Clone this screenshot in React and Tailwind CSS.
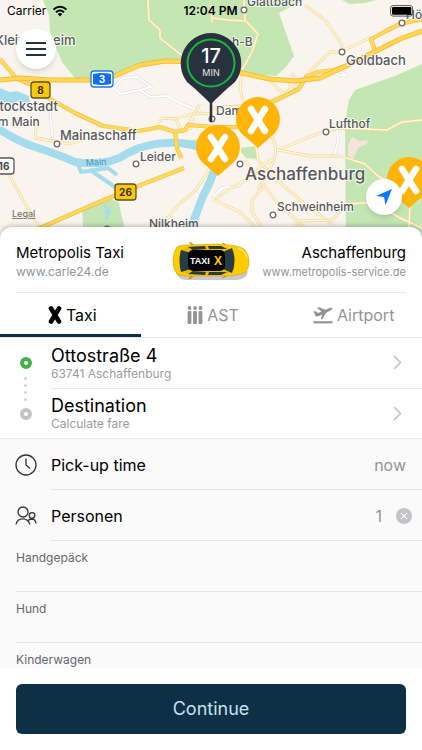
import React, { useState } from 'react';

const ROADS = [
  'M148 0 L149 20 L160 30 L160 38 L180 54 L205 66',
  'M305 5 L325 20 L341 43 L342 52',
  'M342 52 L330 52 L310 71 L296 88 L270 101',
  'M342 51 L370 38',
  'M213 18 L228 20 L246 21 L258 34 L252 52 L242 70',
  'M211 5 L212 22 M244 0 L245 22',
  'M242 72 L240 88 L244 105 L236 128',
  'M236 128 Q260 122 272 137 Q280 152 270 168 L258 190',
  'M211 108 L240 106 L258 100',
  'M278 150 L324 131 L340 128 L387 130 L402 122 L422 120',
  'M278 150 L310 156 L340 156 L365 164 L378 176 L410 196',
  'M256 146 L258 160 L275 178 L300 200 L332 224',
  'M245 160 L262 182 L277 203 L305 228',
  'M215 200 L228 190 L250 178 L262 165 L275 158',
  'M212 199 L240 212 L256 228',
  'M265 185 L252 200 L252 212 L262 228',
  'M293 228 L300 221 L332 220 L347 204 L380 202',
  'M378 205 L400 218 L422 228 M410 205 L409 228',
  'M37 120 L35 138 L70 144 L84 139',
  'M0 158 L14 184 L30 212 L40 228',
  'M212 165 L196 190 L178 205 L160 228',
  'M155 128 L162 118 L175 119 L196 113 L211 114',
  'M175 118 L182 132 L191 128 L193 116 M185 130 L200 104',
  'M270 81 L284 94 L298 84 L292 73 M300 87 L292 92 L288 80',
];

const SIDE_STREETS =
  'M115 88 L122 78 L137 77 L151 87 L140 90 L150 97 L167 96 L182 104 M115 88 L120 94 L140 90 M182 104 L200 111 M335 74 L346 76 L342 72 M275 100 L300 88 M215 195 L222 188 L240 186 M50 113 L53 140 M337 130 L338 142 L334 156';

const MAIN_ROADS = [
  'M0 59 L16 78 L38 88 L50 99 L75 113 L103 126 L138 131 L150 129 L160 127 L175 132 L185 130 L188 125 L215 127 L240 127',
  'M175 132 L177 148 L181 158',
  'M38 229 L90 206 L128 190 L184 168',
  'M422 19 L400 24 L386 31 L371 39 L375 51',
  'M270 103 L299 89 L306 77 L318 72 L334 70 L345 66',
];

const MOTORWAY =
  'M0 80 L20 78 L50 80 L90 80 L112 77 L140 65 L165 61 L205 62 L242 73 L270 79 L295 81 L320 78 L346 66 L376 51 L400 39 L422 31';

const PLACES = [
  { name: 'Kleinostheim', x: -5, y: 45, size: 13 },
  { name: 'Stockstadt', x: -9, y: 111, size: 13 },
  { name: 'am Main', x: -9, y: 126, size: 12 },
  { name: 'Mainaschaff', x: 60, y: 140, size: 13 },
  { name: 'Leider', x: 140, y: 161, size: 12 },
  { name: 'Nilkheim', x: 149, y: 228, size: 12 },
  { name: 'Glattbach', x: 247, y: 6, size: 12 },
  { name: 'Goldbach', x: 346, y: 65, size: 13 },
  { name: 'Hösbach', x: 406, y: 19, size: 12 },
  { name: 'h-B', x: 232, y: 46, size: 12 },
  { name: 'Damm', x: 216, y: 115, size: 12 },
  { name: 'Lufthof', x: 329, y: 128, size: 12 },
  { name: 'Schweinheim', x: 277, y: 211, size: 12 },
  { name: 'Aschaffenburg', x: 245, y: 180, size: 17 },
];

const DOTS = [
  [57, 144], [136, 164], [342, 52], [402, 23], [244, 10],
  [212, 119], [240, 164], [326, 132], [273, 215], [107, 229],
];

const TAXIS = [
  { x: 258, y: 120 },
  { x: 218, y: 148 },
  { x: 409, y: 180 },
];

function Shield({ x, y, width, label, fill, stroke, color }) {
  return (
    <g>
      <rect x={x} y={y} width={width} height="16" rx="3" fill={fill} stroke={stroke} strokeWidth="1.3" />
      <text x={x + width / 2} y={y + 12} textAnchor="middle" fontSize="10" fontWeight="700" fill={color}>{label}</text>
    </g>
  );
}

function CityMap() {
  return (
    <svg viewBox="0 0 422 240" preserveAspectRatio="xMidYMin slice" className="absolute inset-0 h-full w-full" role="img" aria-label="Map of Aschaffenburg">
      <rect x="-200" width="900" height="240" fill="#f9f4ed" />

      {/* woods */}
      <g fill="#c3e6b3">
        <path d="M43 0 L49 15 L50 32 L62 62 L75 78 L112 77 L140 65 L165 61 L205 62 L242 73 L276 76 L286 67 L294 56 L279 13 L303 0 Z" />
        <path d="M342 0 L350 4 L365 3 L376 0 Z" />
        <path d="M422 64 L395 76 L355 90 L349 100 L345 122 L346 240 L700 240 L700 64 Z" />
        <path d="M82 208 L112 199 L119 203 L121 214 L125 228 L125 240 L84 240 Z" />
        <path d="M241 148 L256 146 L257 159 L246 158 L241 152 Z" />
        <path d="M184 141 L200 139 L200 147 L188 148 Z" />
      </g>
      <path d="M352 137 L360 141 L368 140 L367 144 L358 148 L353 159 L348 156 L348 145 Z" fill="#f7e3dd" />

      {/* water */}
      <g fill="none" stroke="#a4dcee" strokeLinejoin="round">
        <path d="M-4 127 Q15 140 35 147 Q60 155 75 162 Q108 167 128 153 Q150 141 180 143 Q212 146 216 164 Q212 180 203 196 L190 230" strokeWidth="8" />
        <path d="M77 162 L81 172 L108 168 L117 175" strokeWidth="4" />
        <path d="M90 170 L118 189" strokeWidth="4" />
      </g>
      <path d="M0 88 L10 92 L17 91 L29 96 L30 104 L18 101 L8 105 L0 102 Z" fill="#a4dcee" />
      <path d="M104 203 L111 211 L106 222 Z" fill="#a4dcee" />

      {/* streets: casing first, then the lighter fill */}
      <g fill="none" strokeLinejoin="round">
        <path d={SIDE_STREETS} stroke="#d9d9dc" strokeWidth="3" />
        <path d={SIDE_STREETS} stroke="#fff" strokeWidth="2" />
        {ROADS.map((d) => (
          <g key={d}>
            <path d={d} stroke="#f1d795" strokeWidth="2.8" />
            <path d={d} stroke="#fff6d9" strokeWidth="1.5" />
          </g>
        ))}
        {MAIN_ROADS.map((d) => (
          <g key={d}>
            <path d={d} stroke="#eebb4a" strokeWidth="4.2" />
            <path d={d} stroke="#ffda58" strokeWidth="3" />
          </g>
        ))}
        <path d={MOTORWAY} stroke="#eeb63c" strokeWidth="5" />
        <path d={MOTORWAY} stroke="#ffd64d" strokeWidth="3.6" />
      </g>

      {DOTS.map(([cx, cy]) => (
        <circle key={`${cx}-${cy}`} cx={cx} cy={cy} r="2.8" fill="#fff" stroke="#6b6b6b" strokeWidth="1.3" />
      ))}

      <g fill="#58585a" stroke="#fff" strokeOpacity="0.8" strokeWidth="2" strokeLinejoin="round" className="[paint-order:stroke]">
        {PLACES.map((p) => (
          <text key={p.name} x={p.x} y={p.y} fontSize={p.size} fontWeight="500">{p.name}</text>
        ))}
      </g>
      <text x="86" y="166" fontSize="9" fill="#4c93b5" transform="rotate(-4 86 166)">Main</text>
      <text x="12" y="217" fontSize="9" fontWeight="500" fill="#77736f" textDecoration="underline">Legal</text>

      <Shield x={31} y={82} width={19} label="8" fill="#f9c70c" stroke="#5d511c" color="#3a3000" />
      <Shield x={115} y={184} width={21} label="26" fill="#f9c70c" stroke="#5d511c" color="#3a3000" />
      <Shield x={-6} y={158} width={20} label="16" fill="#fff" stroke="#555" color="#444" />
      <rect x="91" y="71" width="22" height="16" rx="3" fill="#fff" stroke="#1b78e8" strokeWidth="1.3" />
      <path d="M93 74 Q102 72 111 74 V84 Q102 86 93 84 Z" fill="#0f6ff0" />
      <text x="102" y="83" textAnchor="middle" fontSize="10" fontWeight="700" fill="#fff">3</text>

      {/* pick-up pin */}
      <path d="M211 95 V121" stroke="#28323f" strokeWidth="2.5" strokeLinecap="round" />
      <path d="M211 33 A30.500 30.500 0 0 1 235 82 Q224 91 211 104 Q198 91 187 82 A30.500 30.500 0 0 1 211 33 Z" fill="#28323f" />
      <circle cx="211" cy="63" r="23.500" fill="none" stroke="#17b53c" strokeWidth="2" />
      <text x="211" y="63" textAnchor="middle" fontSize="20" fontWeight="500" fill="#fff">17</text>
      <text x="211" y="76" textAnchor="middle" fontSize="9" fill="#e3e6ea">MIN</text>

      {TAXIS.map(({ x, y }) => (
        <g key={x} transform={`translate(${x} ${y})`}>
          <path d="M0 -23 A22 22 0 0 1 16 14 L0 28 L-16 14 A22 22 0 0 1 0 -23 Z" fill="#ffb507" />
          <path d="M-7 -11 L7 11 M7 -11 L-7 11" stroke="#fff" strokeWidth="6.500" strokeLinecap="round" />
        </g>
      ))}
    </svg>
  );
}

function StatusBar() {
  return (
    <div className="relative grid h-[22px] grid-cols-3 items-center pl-[7px] pr-2 text-xs text-black">
      <div className="flex items-center gap-1.5">
        Carrier
        <svg viewBox="0 0 16 12" className="h-3 w-4" aria-hidden="true">
          <path d="M1.500 4.500 Q8 -1 14.500 4.500 M4 7.300 Q8 3.800 12 7.300" fill="none" stroke="#000" strokeWidth="2" />
          <path d="M5.700 9 Q8 7.200 10.300 9 L8 11.400 Z" />
        </svg>
      </div>
      <span className="text-center font-semibold">12:04 PM</span>
      <svg viewBox="0 0 26 12" className="h-3 w-[26px] justify-self-end" aria-hidden="true">
        <rect x="2.600" y="0.600" width="22" height="10.500" rx="2.500" fill="none" stroke="#555" />
        <rect x="4" y="2" width="19.300" height="7.700" rx="1.200" />
      </svg>
    </div>
  );
}

function TaxiCar() {
  return (
    <svg viewBox="0 0 80 40" className="h-10 w-20 shrink-0" role="img" aria-label="Taxi X">
      <path d="M5 30 Q7 38 16 38 L66 38 Q76 37 77 29 Z" fill="#c9c9cb" />
      <path d="M21 4 L18 0 L20 0 L24 4 Z M20 33 L17 37 L20 37 L24 33 Z M55 5 L51 1 L53 1 L58 5 Z M55 32 L51 36 L53 36 L58 32 Z" fill="#d79b00" />
      <path d="M6 5 Q9 3 17 3 L48 2 Q67 3 73 7 Q78 12 78 19 Q78 28 73 31 Q67 34 48 34 L17 34 Q9 34 6 32 Q2 27 2 19 Q2 10 6 5 Z" fill="#fc0" stroke="#d49c05" strokeWidth="0.6" />
      <path d="M10 8 Q14 5 20 4 L48 4 Q59 5 63 10 Q65 19 63 28 Q59 32 48 33 L20 33 Q14 32 10 29 Q7 19 10 8 Z" fill="#f0b800" />
      <path d="M10 8 L20 11 Q17 19 20 27 L10 30 Q7 19 10 8 Z" fill="#263e43" />
      <path d="M52 10 L61 6 Q66 19 61 31 L52 27 Q55 19 52 10 Z" fill="#263e43" />
      <path d="M17 5 L34 4 L35 7 L22 8 Z M37 4 L50 4 L56 7 L38 7 Z M17 32 L34 33 L35 30 L22 29 Z M37 33 L50 33 L56 30 L38 30 Z" fill="#27393c" />
      <rect x="17" y="8" width="37" height="21" rx="5" fill="#050505" />
      <g fontFamily="'Liberation Sans', sans-serif" fontWeight="700">
        <text x="19" y="22" fontSize="9" fill="#fff">TAXI</text>
        <text x="43" y="23" fontSize="12" fill="#ffcb05">X</text>
      </g>
      <path d="M67 6 Q75 9 76 16" fill="none" stroke="#fff0a2" />
    </svg>
  );
}

function XMark() {
  return (
    <svg viewBox="0 0 14 20" className="h-5 w-3.5" aria-hidden="true">
      <path d="M3 3.500 L11 16.500 M11 3.500 L3 16.500" stroke="currentColor" strokeWidth="4.600" strokeLinecap="round" />
    </svg>
  );
}

function PeopleMark() {
  return (
    <svg viewBox="0 0 16 20" className="h-5 w-4" fill="currentColor" aria-hidden="true">
      {[2.5, 8, 13.5].map((x) => (
        <g key={x}>
          <circle cx={x} cy="3" r="1.900" />
          <rect x={x - 1.9} y="6" width="3.800" height="13" rx="1" />
        </g>
      ))}
    </svg>
  );
}

function PlaneMark() {
  return (
    <svg viewBox="0 0 20 18" className="h-[18px] w-5" fill="currentColor" aria-hidden="true">
      <path d="M0.500 5.500 L2 5 L5 7 L8.500 5.500 L4 2 L6 1.200 L12.500 3.800 L16.500 2 Q19 0.800 19.500 2 Q19.700 3.200 17.500 4.400 L13 7 L9.500 13 L7.800 13.500 L9 8.800 L4.500 10.500 Q3 10.700 2.400 9.500 Z" />
      <rect x="0.500" y="15.200" width="19" height="2.200" />
    </svg>
  );
}

const TABS = [
  { id: 'taxi', label: 'Taxi', Icon: XMark },
  { id: 'ast', label: 'AST', Icon: PeopleMark },
  { id: 'airport', label: 'Airtport', Icon: PlaneMark },
];

function Chevron() {
  return (
    <svg viewBox="0 0 9 15" className="mr-5 h-[15px] w-[9px]" aria-hidden="true">
      <path d="M1 1 L7.500 7.500 L1 14" fill="none" stroke="#c5c5ca" strokeWidth="1.700" />
    </svg>
  );
}

function RouteRow({ title, subtitle }) {
  return (
    <button type="button" className="flex w-full flex-1 items-center justify-between text-left">
      <span className="flex flex-col pt-0.5">
        <span className="text-lg leading-5 text-black">{title}</span>
        <span className="text-xs leading-4 text-[#9b9ca0]">{subtitle}</span>
      </span>
      <Chevron />
    </button>
  );
}

export default function App() {
  const [tab, setTab] = useState('taxi');
  const [persons, setPersons] = useState(1);

  return (
    <div className="flex h-dvh flex-col overflow-hidden bg-white font-['Inter','Noto_Sans',sans-serif]">
      <header className="relative h-60 shrink-0">
        <CityMap />
        <StatusBar />
        <button type="button" aria-label="Menu" className="absolute left-4 top-[29px] flex size-10 flex-col items-center justify-center gap-1 rounded-full bg-white shadow-md">
          <span className="h-0.5 w-5 bg-[#28323f]" />
          <span className="h-0.5 w-5 bg-[#28323f]" />
          <span className="h-0.5 w-5 bg-[#28323f]" />
        </button>
        <button type="button" aria-label="Show my location" className="absolute right-5 top-[179px] flex size-9 items-center justify-center rounded-full bg-white shadow-md">
          <svg viewBox="0 0 18 18" className="size-[18px]" aria-hidden="true">
            <path d="M17 1 L10.500 17 L9 9 L1 8 Z" fill="#087aff" />
          </svg>
        </button>
      </header>

      <main className="relative -mt-[13px] flex min-h-0 flex-1 flex-col rounded-t-xl bg-white shadow-[0_-1px_5px_rgba(0,0,0,0.25)]">
        <section className="mx-4 flex h-[66px] shrink-0 items-center justify-between border-b border-[#e9e9ec] pt-1">
          <div className="flex flex-1 flex-col">
            <h1 className="text-[15px] leading-5 text-black">Metropolis Taxi</h1>
            <a href="#carle24" className="text-xs leading-[18px] text-[#939498]">www.carle24.de</a>
          </div>
          <TaxiCar />
          <div className="flex flex-1 flex-col items-end">
            <h2 className="text-[15px] leading-5 text-black">Aschaffenburg</h2>
            <a href="#metropolis-service" className="text-[11px] leading-[18px] text-[#939498]">www.metropolis-service.de</a>
          </div>
        </section>

        <div role="tablist" className="grid h-[45px] shrink-0 grid-cols-3 border-b border-[#e9e9ec]">
          {TABS.map(({ id, label, Icon }) => (
            <button
              key={id}
              type="button"
              role="tab"
              aria-selected={tab === id}
              onClick={() => setTab(id)}
              className={`flex items-center justify-center gap-1 border-b-3 pl-1 pt-0.5 text-base ${tab === id ? 'border-[#0d3047] text-black' : 'border-transparent text-[#939498]'}`}
            >
              <Icon />
              {label}
            </button>
          ))}
        </div>

        <section className="flex h-[101px] shrink-0 border-b border-[#e9e9ec]">
          <div className="flex w-[51px] flex-col items-center justify-between pb-[18px] pt-[19px]">
            <span className="size-3 rounded-full border-4 border-[#43b149] bg-white" />
            <span className="flex flex-col gap-1">
              <span className="size-[3px] rounded-full bg-[#d3d3d6]" />
              <span className="size-[3px] rounded-full bg-[#d3d3d6]" />
              <span className="size-[3px] rounded-full bg-[#d3d3d6]" />
              <span className="size-[3px] rounded-full bg-[#d3d3d6]" />
            </span>
            <span className="size-3 rounded-full border-4 border-[#c5c3c5] bg-white" />
          </div>
          <div className="flex flex-1 flex-col divide-y divide-[#e9e9ec]">
            <RouteRow title="Ottostraße 4" subtitle="63741 Aschaffenburg" />
            <RouteRow title="Destination" subtitle="Calculate fare" />
          </div>
        </section>

        <section className="min-h-0 flex-1 overflow-hidden bg-[#fafafa]">
          <button type="button" className="flex h-[51px] w-full items-center text-left">
            <span className="flex w-[51px] justify-center">
              <svg viewBox="0 0 22 22" className="size-[22px]" fill="none" stroke="#333" strokeWidth="1.300" aria-hidden="true">
                <circle cx="11" cy="11" r="10" />
                <path d="M11 4.500 V11 L15 14.500" />
              </svg>
            </span>
            <span className="flex h-full flex-1 items-center justify-between border-b border-[#e4e4ea] pr-4 pt-0.5">
              <span className="text-base text-black">Pick-up time</span>
              <span className="text-base text-[#939498]">now</span>
            </span>
          </button>

          <div className="flex h-[51px] items-center">
            <span className="flex w-[51px] justify-center">
              <svg viewBox="0 0 22 20" className="h-5 w-[22px]" fill="none" stroke="#333" strokeWidth="1.300" aria-hidden="true">
                <circle cx="8" cy="6" r="5" />
                <circle cx="17" cy="9.500" r="2.800" />
                <path d="M1 18.500 Q2 12.800 8 12.800 Q13 12.800 15 18.500 M12.500 15 Q14.500 13 17 13 Q20.500 13.300 21 17.500" />
              </svg>
            </span>
            <div className="flex h-full flex-1 items-center border-b border-[#e4e4ea] pr-2.5 pt-0.5">
              <span className="flex-1 text-base text-black">Personen</span>
              <span className="mr-3.5 text-base text-[#939498]">{persons}</span>
              <button type="button" aria-label="Reset persons" onClick={() => setPersons(1)} className="flex size-4 items-center justify-center rounded-full bg-[#c2c2c7]">
                <svg viewBox="0 0 8 8" className="size-2" aria-hidden="true">
                  <path d="M0.800 0.800 L7.200 7.200 M7.200 0.800 L0.800 7.200" stroke="#fff" strokeWidth="1.200" />
                </svg>
              </button>
            </div>
          </div>

          {['Handgepäck', 'Hund', 'Kinderwagen'].map((name) => (
            <button key={name} type="button" className="ml-4 flex h-[51px] w-full items-start border-b border-[#e4e4ea] pt-2 text-left text-xs leading-[18px] text-[#66676a]">
              {name}
            </button>
          ))}
        </section>

        <footer className="shrink-0 bg-white p-4">
          <button type="button" className="h-[50px] w-full rounded-md bg-[#0d3047] text-lg text-[#c9e0ee]">Continue</button>
        </footer>
      </main>
    </div>
  );
}
